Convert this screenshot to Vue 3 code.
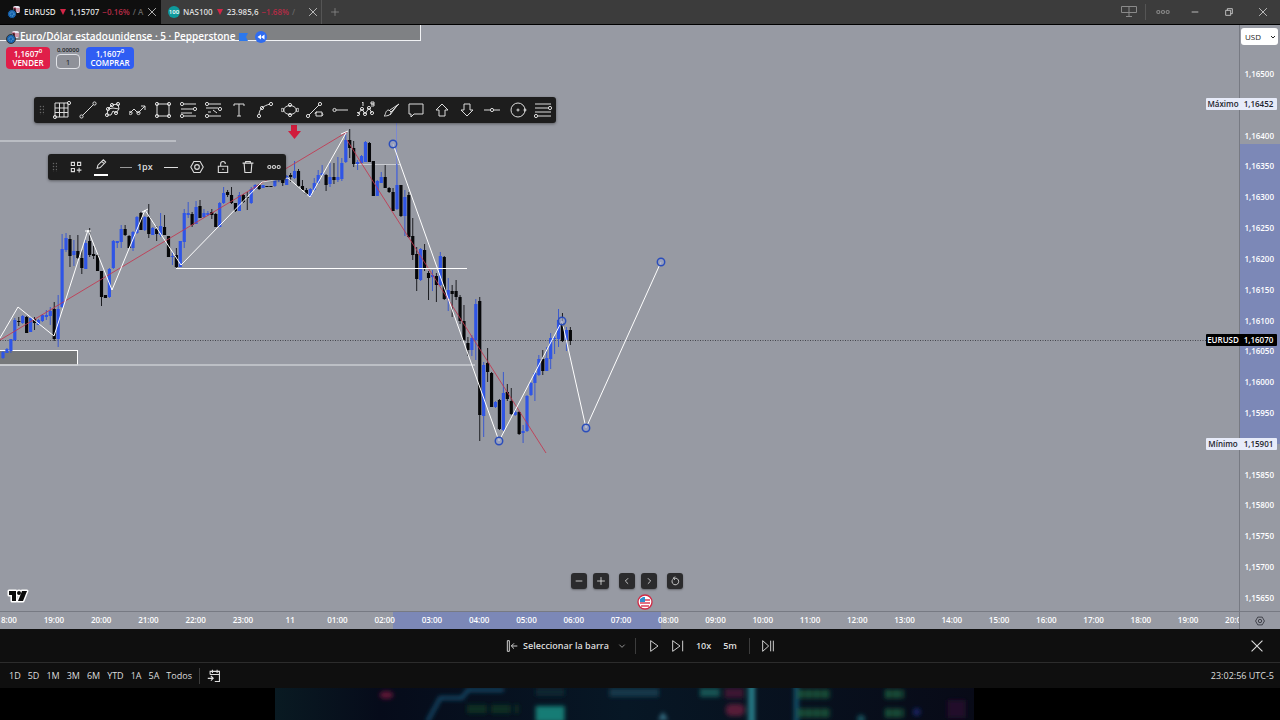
<script setup>
const dot = (x, y, r = 1.6) => `M${x - r} ${y}a${r} ${r} 0 1 0 ${2 * r} 0a${r} ${r} 0 1 0 ${-2 * r} 0`

const drawTools = [
  { name: 'Retroceso de Fibonacci', d: 'M2 2H15V16H2ZM2 7H15M2 11.500H15M6.500 2V16M11 2V16' + dot(2, 16) + dot(16, 2) },
  { name: 'Línea de tendencia', d: 'M3.500 14.500L14.500 3.500' + dot(2.5, 15.5) + dot(15.5, 2.5) },
  { name: 'Canal de Gann', d: 'M3 14L4 8L8 4L14 3L15 8L12 12L9 10L7 14ZM4 8L9 7L15 8' + dot(3, 14) + dot(8, 4) + dot(14, 3) + dot(12, 12) + dot(4, 8) },
  { name: 'Trazado', d: 'M1 12L5 8L9 12L16 5M12 5H16V9' + dot(1.5, 12) + dot(9.5, 12) },
  { name: 'Rectángulo', d: 'M3 3H15V15H3Z' + dot(3, 3) + dot(15, 3) + dot(3, 15) + dot(15, 15) },
  { name: 'Posición larga', d: 'M4 3H16M1 8H13M1 12H12M4 15H16' + dot(2, 3) + dot(15, 8) + dot(2, 15) },
  { name: 'Posición corta', d: 'M4 3H16M1 7H13M3 11H6M8 9L12 12M4 15H16' + dot(2, 3) + dot(15, 8) + dot(2, 15) },
  { name: 'Texto', d: 'M4 5V3H14V5M9 3V15M7 15H11' },
  { name: 'Curva', d: 'M3 14C3 8 7 5 14 3' + dot(3, 15) + dot(15, 3) + dot(6, 7) },
  { name: 'Elipse', d: 'M2 9C5 3 13 3 16 9C13 15 5 15 2 9' + dot(1.5, 9) + dot(16.5, 9) + dot(9, 4) + dot(9, 14) },
  { name: 'Línea y forma', d: 'M3 14L13 4M10 11H16V15H10ZM9 13A2 2 0 0 1 11 11M16 12A2 2 0 0 1 16 15' + dot(2, 15) + dot(14, 3) },
  { name: 'Rayo horizontal', d: 'M4 9H16' + dot(2.5, 9) },
  { name: 'Ondas de Elliott', d: 'M1 13L5 8L8 13L12 7L15 12M5 2L6 1V5M14 1H17V3H14ZM14 3H17V5H14' + dot(1, 13) + dot(5, 8) + dot(8, 13) + dot(12, 7) + dot(15, 12) },
  { name: 'Pincel', d: 'M17 3L9 11M17 3L11 7L8 9M2 15C4 14 3 9 7 9L9 11C9 14 6 15 2 15M14 6L8 14' },
  { name: 'Comentario', d: 'M2 3H16V13H7L4 16V13H2Z' },
  { name: 'Flecha arriba', d: 'M9 3L15 9H12V15H6V9H3Z' },
  { name: 'Flecha abajo', d: 'M9 15L15 9H12V3H6V9H3Z' },
  { name: 'Línea horizontal', d: 'M1 9H7M11 9H17' + dot(9, 9) },
  { name: 'Círculo', d: dot(9, 9, 7) + dot(9, 9, 1) + dot(16, 9, 1) },
  { name: 'Niveles', d: 'M1 3H17M1 7H14M1 11H17M4 15H17' + dot(16, 7) + dot(2, 15) },
]
const icons = {
  layout: 'M3 3H7V7H3ZM11 3H15V7H11ZM3 11H7V15H3ZM13 10V16M10 13H16',
  pencil: 'M4 12L5 8L12 1L15 4L8 11ZM10 3L13 6',
  hex: 'M5 2H13L17 9L13 16H5L1 9Z' + dot(9, 9, 3),
  lock: 'M3 8H15V16H3ZM6 8V5C6 1 12 1 12 5M9 11V13',
  trash: 'M2 4H16M6 4V2H12V4M4 4L5 16H13L14 4',
  more: dot(3, 9, 2) + dot(9, 9, 2) + dot(15, 9, 2),
  close: 'M4 4L14 14M14 4L4 14',
  wideClose: 'M2 2L16 16M16 2L2 16',
  plus: 'M9 2V16M2 9H16',
  minus: 'M3 9H15',
  left: 'M11 4L6 9L11 14',
  right: 'M7 4L12 9L7 14',
  down: 'M3 6L9 12L15 6',
  reset: 'M5 6A6 6 0 1 0 11 4H6M9 1L6 4L9 7',
  play: 'M4 1L15 9L4 17Z',
  step: 'M1 1L12 9L1 17ZM16 1V17',
  end: 'M1 1L10 9L1 17ZM13 1V17M17 1V17',
  calendar: 'M4 7V3H16V16H10M4 7H16M7 1V5M13 1V5M1 12H7M5 9L8 12L5 15',
}

const U = 1
const D = 0
const candles = [
  [U,351,352,358,359],[U,348,349,353,353],[U,339,339,351,353],[U,318,320,340,341],[D,317,321,322,326],
  [U,315,316,323,324],[D,316,317,333,333],[U,317,318,332,332],[D,317,319,323,330],[U,319,320,325,325],
  [U,314,315,321,322],[U,310,315,317,320],[U,307,311,316,325],[D,302,309,339,341],[U,295,309,339,347],
  [U,234,249,307,308],[U,233,238,250,252],[D,235,239,256,267],[U,240,251,255,266],[D,235,251,258,259],
  [D,250,258,268,274],[U,240,243,269,269],[D,228,241,255,257],[D,246,254,256,259],[D,254,255,271,271],
  [D,271,271,297,306],[D,295,295,298,298],[U,268,269,297,298],[U,240,241,268,269],[U,241,241,243,248],
  [U,225,229,242,248],[D,225,229,235,236],[D,235,236,248,248],[U,231,232,248,251],[U,216,217,233,234],
  [D,212,213,230,230],[U,216,217,230,231],[D,204,217,234,238],[U,227,228,235,235],[D,226,229,234,241],
  [U,213,226,235,237],[D,215,227,235,235],[D,236,236,257,257],[U,252,256,257,265],[D,248,255,267,268],
  [U,241,241,267,267],[U,209,213,242,248],[U,202,213,215,218],[D,212,214,225,227],[U,201,207,224,224],
  [D,200,206,218,218],[U,209,213,217,218],[U,211,213,215,216],[D,209,212,215,219],[D,213,214,227,227],
  [U,202,203,227,227],[U,187,193,203,204],[D,190,192,195,197],[D,187,195,203,204],[D,203,203,211,212],
  [U,192,195,211,211],[D,194,195,202,203],[D,192,197,198,210],[U,187,189,203,204],[U,184,185,189,190],
  [D,184,185,189,190],[U,185,185,188,188],[D,186,186,187,187],[D,186,186,187,187],[U,178,179,186,187],
  [U,177,178,180,182],[D,176,177,183,186],[U,175,176,185,185],[D,173,175,177,182],[U,161,171,178,179],
  [D,169,171,186,187],[D,180,186,190,191],[D,188,190,194,195],[U,188,189,196,197],[U,178,183,190,191],
  [U,170,175,183,184],[U,165,173,175,176],[D,174,175,185,191],[U,163,177,184,187],[D,163,177,180,184],
  [U,157,177,180,182],[U,158,163,179,181],[U,133,140,162,163],[D,129,140,148,158],[D,141,148,164,167],
  [U,160,162,164,170],[U,155,156,163,163],[U,141,142,162,162],[D,142,143,162,162],[D,161,161,196,196],
  [U,180,181,196,196],[U,172,177,183,183],[D,165,177,188,188],[D,187,188,192,193],[D,188,192,211,211],
  [U,164,185,209,210],[D,185,185,216,217],[U,190,197,216,236],[D,192,195,237,238],[D,218,236,255,260],
  [D,247,254,279,291],[U,248,249,280,281],[D,244,250,269,271],[D,271,273,278,300],[U,270,275,277,291],
  [D,273,276,285,302],[U,252,256,285,286],[D,256,257,299,300],[U,278,290,299,311],[D,285,291,294,317],
  [D,280,291,297,300],[D,295,297,321,324],[D,305,321,340,341],[D,337,343,350,356],[U,335,338,350,356],
  [U,299,304,340,360],[D,297,301,415,441],[U,362,365,416,437],[D,348,363,372,382],[D,372,373,407,407],
  [U,401,402,407,408],[D,399,400,429,430],[U,372,393,430,431],[D,384,392,399,401],[D,388,401,414,415],
  [U,410,412,415,416],[D,411,412,434,435],[U,425,431,433,443],[U,395,396,431,432],[U,382,383,395,396],
  [U,372,373,383,401],[U,355,359,375,376],[D,350,359,371,375],[U,347,358,371,371],[U,333,338,359,369],
  [U,335,338,339,354],[U,309,320,339,347],[D,313,323,341,342],[U,327,330,340,351],[D,327,330,341,345],
].map(([up, high, top, bottom, low], i) => ({ up, high, top, bottom, low, x: 3 + i * 3.94 }))

const handles = [[393, 144], [499, 441], [562, 321], [586, 428], [661, 262]]

const prices = Array.from({ length: 18 }, (_, i) => '1,' + (16500 - i * 50))
const hiddenPrices = ['1,16450', '1,15900']
const tags = [
  { label: 'Máximo', price: '1,16452', top: 79, kind: 'light' },
  { label: 'EURUSD', price: '1,16070', top: 315, kind: 'dark' },
  { label: 'Mínimo', price: '1,15901', top: 419, kind: 'light' },
].map((t) => ({ ...t, pos: (t.top / 586) * 100 + '%' }))

const hours = ['18:00', '19:00', '20:00', '21:00', '22:00', '23:00', '11',
  ...Array.from({ length: 20 }, (_, i) => String(i + 1).padStart(2, '0') + ':00')]
const ranges = ['1D', '5D', '1M', '3M', '6M', 'YTD', '1A', '5A', 'Todos']
</script>

<template>
  <div class="app">
    <header class="titlebar">
      <div class="tab active">
        <svg class="pair" viewBox="0 0 14 14"><rect x="6" y="1" width="7" height="7" rx="2" fill="#e8e8f2" /><path d="M6 3h3v4M10 4h3M10 6h3" stroke="#b74962" /><circle cx="5" cy="9" r="4.500" fill="#1762ae" stroke="#101010" /><circle cx="5" cy="9" r="2" fill="none" stroke="#72b8db" stroke-dasharray="1 1" /></svg>
        <b>EURUSD</b><i class="fall"></i><span>1,15707</span><span class="loss">−0.16%</span><span class="fade">/ A</span>
        <button class="icon-btn push" aria-label="Cerrar EURUSD"><svg class="ic s10" viewBox="0 0 18 18"><path :d="icons.wideClose" /></svg></button>
      </div>
      <div class="tab">
        <span class="hundred">100</span>
        <b>NAS100</b><i class="fall"></i><span>23.985,6</span><span class="loss">−1.68%</span><span class="fade">/</span>
        <button class="icon-btn push" aria-label="Cerrar NAS100"><svg class="ic s10" viewBox="0 0 18 18"><path :d="icons.wideClose" /></svg></button>
      </div>
      <button class="icon-btn add" aria-label="Nueva pestaña"><svg class="ic s10" viewBox="0 0 18 18"><path :d="icons.plus" /></svg></button>
      <div class="window-tools">
        <button class="icon-btn dim" aria-label="Diseño"><svg class="ic wide" viewBox="0 0 16 12"><path d="M.5.5H15.500V6.500H.5ZM8 .5V10.500M5 10.500H11" /></svg></button>
        <span class="rule"></span>
        <button class="icon-btn dim more" aria-label="Más"><svg class="ic s14" viewBox="0 0 18 18"><path :d="icons.more" /></svg></button>
        <button class="icon-btn" aria-label="Minimizar"><svg class="ic s10" viewBox="0 0 18 18"><path :d="icons.minus" /></svg></button>
        <button class="icon-btn" aria-label="Restaurar"><svg class="ic s10" viewBox="0 0 18 18"><path d="M3 6H12V15H3ZM6 6V3H15V12H12" /></svg></button>
        <button class="icon-btn" aria-label="Cerrar"><svg class="ic s10" viewBox="0 0 18 18"><path :d="icons.wideClose" /></svg></button>
      </div>
    </header>

    <main class="board">
      <section class="plot">
        <svg class="canvas" viewBox="0 25 1239 586" preserveAspectRatio="none">
          <rect x="-2" y="23" width="422.500" height="17.500" fill="#7f8184" stroke="#f1f2f4" />
          <path d="M0 141H176" stroke="#c6c8ce" stroke-width="1.500" />
          <rect x="-2" y="350.500" width="79.500" height="14.500" fill="#77797b" stroke="#fff" />
          <path d="M0 365H475" stroke="#c9cbd1" stroke-width="1.500" />
          <path d="M355 164.500H400" stroke="#c9cbd1" />
          <path d="M396.500 120V210" stroke="#7b88d0" />
          <path d="M0 340.500H1239" stroke="#44464c" stroke-dasharray="1 1.500" />
          <g v-for="(c, i) in candles" :key="i" :class="c.up ? 'up' : 'down'">
            <line :x1="c.x" :x2="c.x" :y1="c.high" :y2="c.low" />
            <rect :x="c.x - 1.6" :y="c.top" width="3.200" :height="c.bottom - c.top" />
          </g>
          <g fill="none">
            <path d="M0 340L347 132M347 140L360 161L546 453" stroke="#c4364f" stroke-opacity=".85" />
            <path d="M0 338L18 307L54 336L88 230L112 290L145 210L181 265L262 182L288 178L310 197L346 133" stroke="#fff" />
            <path d="M176 268.500H467M85 231H91M142 212L148 209M341 134L348 131" stroke="#fff" />
            <path d="M393 144L499 441L562 321L586 428L661 262" stroke="#fff" />
          </g>
          <circle v-for="(h, i) in handles" :key="'h' + i" :cx="h[0]" :cy="h[1]" r="3.700" class="handle" />
          <path d="M291 125H297V131H301L294.500 139L288 131H291Z" fill="#d11c3c" />
        </svg>

        <div class="legend">
          <h1>
            <svg class="pair" viewBox="0 0 14 14"><rect x="6" y="1" width="7" height="7" rx="2" fill="#e8e8f2" /><path d="M6 3h3v4M10 4h3M10 6h3" stroke="#b74962" /><circle cx="5" cy="9" r="4.500" fill="#1762ae" stroke="#333" /><circle cx="5" cy="9" r="2" fill="none" stroke="#72b8db" stroke-dasharray="1 1" /></svg>
            <span>Euro/Dólar estadounidense · 5 · Pepperstone</span>
            <svg class="flag" viewBox="0 0 9 8"><path d="M0 0H9L7 4L9 8H0Z" fill="#2c78ed" /></svg>
            <svg class="rewind" viewBox="0 0 12 12"><circle cx="6" cy="6" r="6" fill="#2f6cf0" /><path d="M6 3.500V8.500L2.500 6ZM9.500 3.500V8.500L6 6Z" fill="#fff" /></svg>
          </h1>
          <div class="trade">
            <button class="sell"><span>1,1607<sup>0</sup></span><span>VENDER</span></button>
            <label class="lots"><span>0,00000</span><input value="1" aria-label="Cantidad" /></label>
            <button class="buy"><span>1,1607<sup>0</sup></span><span>COMPRAR</span></button>
          </div>
        </div>

        <div class="toolbar draw">
          <span class="grip"></span>
          <button v-for="t in drawTools" :key="t.name" class="icon-btn" :aria-label="t.name"><svg class="ic s18" viewBox="0 0 18 18"><path :d="t.d" /></svg></button>
        </div>

        <div class="toolbar style-bar">
          <span class="grip"></span>
          <button class="icon-btn" aria-label="Plantillas"><svg class="ic s14" viewBox="0 0 18 18"><path :d="icons.layout" /></svg></button>
          <button class="icon-btn color" aria-label="Color"><svg class="ic s14" viewBox="0 0 18 18"><path :d="icons.pencil" /></svg></button>
          <button class="icon-btn width"><i class="dash grey"></i>1px</button>
          <button class="icon-btn" aria-label="Estilo de línea"><i class="dash"></i></button>
          <button class="icon-btn" aria-label="Configuración"><svg class="ic s14" viewBox="0 0 18 18"><path :d="icons.hex" /></svg></button>
          <button class="icon-btn" aria-label="Bloquear"><svg class="ic s14" viewBox="0 0 18 18"><path :d="icons.lock" /></svg></button>
          <button class="icon-btn" aria-label="Eliminar"><svg class="ic s14" viewBox="0 0 18 18"><path :d="icons.trash" /></svg></button>
          <button class="icon-btn" aria-label="Más opciones"><svg class="ic s14" viewBox="0 0 18 18"><path :d="icons.more" /></svg></button>
        </div>

        <div class="nav">
          <button aria-label="Alejar"><svg class="ic s10" viewBox="0 0 18 18"><path :d="icons.minus" /></svg></button>
          <button aria-label="Acercar"><svg class="ic s10" viewBox="0 0 18 18"><path :d="icons.plus" /></svg></button>
          <button class="gap" aria-label="Izquierda"><svg class="ic s10" viewBox="0 0 18 18"><path :d="icons.left" /></svg></button>
          <button aria-label="Derecha"><svg class="ic s10" viewBox="0 0 18 18"><path :d="icons.right" /></svg></button>
          <button class="gap" aria-label="Restablecer"><svg class="ic s10" viewBox="0 0 18 18"><path :d="icons.reset" /></svg></button>
        </div>
        <svg class="event" viewBox="0 0 16 16"><circle cx="8" cy="8" r="7" fill="#fff" stroke="#cf2945" stroke-width="1.300" /><path d="M8 6H13M3 9H13M4 12H12" stroke="#d9415b" stroke-width="1.300" /><path d="M3 7V5L6 3H8V8H3Z" fill="#2d8fd0" /></svg>
        <svg class="logo" viewBox="0 0 22 14"><g fill="#0b0b0b" stroke="#fff" stroke-width="3" stroke-linejoin="round"><path d="M2 2H9V12H5V6H2Z" /><circle cx="12" cy="4" r="2" /><path d="M15 2H20L16 12H11Z" /></g><g fill="#0b0b0b"><path d="M2 2H9V12H5V6H2Z" /><circle cx="12" cy="4" r="2" /><path d="M15 2H20L16 12H11Z" /></g></svg>
      </section>

      <aside class="price-axis">
        <div class="span"></div>
        <select aria-label="Moneda"><option>USD</option></select>
        <svg class="chev" viewBox="0 0 18 18"><path :d="icons.down" /></svg>
        <ol>
          <li v-for="p in prices" :key="p"><template v-if="!hiddenPrices.includes(p)">{{ p }}</template></li>
        </ol>
      </aside>
      <div v-for="t in tags" :key="t.label" class="tag" :class="t.kind" :style="{ top: t.pos }"><span>{{ t.label }}</span><span>{{ t.price }}</span></div>
    </main>

    <div class="time-row">
      <div class="time-axis"><div class="hours"><i class="time-span"></i><span v-for="h in hours" :key="h">{{ h }}</span></div></div>
      <button class="icon-btn corner" aria-label="Configurar escala"><svg class="ic s10" viewBox="0 0 18 18"><path :d="icons.hex" /></svg></button>
    </div>

    <section class="replay">
      <button class="pick"><svg class="ic s12" viewBox="0 0 18 18"><path d="M2 1H5V17H2ZM8 9H17M12 5L8 9L12 13" /></svg><span>Seleccionar la barra</span><svg class="ic s8" viewBox="0 0 18 18"><path :d="icons.down" /></svg></button>
      <span class="rule"></span>
      <button aria-label="Reproducir"><svg class="ic s12" viewBox="0 0 18 18"><path :d="icons.play" /></svg></button>
      <button aria-label="Avanzar"><svg class="ic s12" viewBox="0 0 18 18"><path :d="icons.step" /></svg></button>
      <button>10x</button>
      <button>5m</button>
      <span class="rule"></span>
      <button aria-label="Ir al final"><svg class="ic s12" viewBox="0 0 18 18"><path :d="icons.end" /></svg></button>
      <button class="quit" aria-label="Cerrar reproducción"><svg class="ic s14" viewBox="0 0 18 18"><path :d="icons.wideClose" /></svg></button>
    </section>

    <nav class="ranges">
      <button v-for="r in ranges" :key="r">{{ r }}</button>
      <span class="rule"></span>
      <button aria-label="Ir a fecha"><svg class="ic s14" viewBox="0 0 18 18"><path :d="icons.calendar" /></svg></button>
      <time>23:02:56 UTC-5</time>
    </nav>

    <footer class="wallpaper">
      <svg viewBox="0 0 703 32" preserveAspectRatio="none">
        <defs>
          <linearGradient id="night"><stop offset="0" stop-color="#091a22" /><stop offset=".15" stop-color="#060b1a" /><stop offset=".5" stop-color="#071725" /><stop offset="1" stop-color="#080a17" /></linearGradient>
          <filter id="soft"><feGaussianBlur stdDeviation="2" /></filter>
        </defs>
        <rect width="703" height="32" fill="url(#night)" />
        <g filter="url(#soft)">
          <path d="M153 34L166 10H188L194 2H230" fill="none" stroke="#184562" stroke-width="4" />
          <rect x="262" y="18" width="29" height="16" fill="#167c75" /><rect x="262" y="0" width="29" height="8" fill="#0d2632" />
          <rect x="336" y="0" width="50" height="9" fill="#163749" /><rect x="427" y="0" width="20" height="9" fill="#185352" />
          <rect x="452" y="0" width="19" height="10" fill="#3c1830" /><rect x="453" y="16" width="19" height="12" rx="5" fill="#571a37" />
          <path d="M479 -4V36" stroke="#267884" stroke-width="7" /><path d="M524 -4V36" stroke="#184f68" stroke-width="5" />
          <path d="M525 6H558M525 25H558M613 6H632M613 25H632" stroke="#195039" stroke-width="9" stroke-dasharray="7 1" />
          <path d="M193 21H245" stroke="#0b2d22" stroke-width="9" stroke-dasharray="20 4" />
          <ellipse cx="112" cy="7" rx="7" ry="4" fill="#5b1935" /><path d="M385 32L390 24L395 32" fill="#397388" /><circle cx="645" cy="24" r="4" fill="#14245d" /><circle cx="589" cy="31" r="4" fill="#18515b" /><rect x="676" y="12" width="18" height="18" fill="#21102b" />
        </g>
      </svg>
    </footer>
  </div>
</template>

<style>
body { margin: 0; background: #000; }
</style>

<style scoped>
.app { display: flex; flex-direction: column; min-height: 100vh; overflow: hidden; color: #ddd; font: 600 9px/12px "Open Sans", "Noto Sans", sans-serif; }
* { box-sizing: border-box; }
button { padding: 0; border: 0; background: none; color: inherit; font: inherit; }
svg { display: block; flex: none; }
.ic { fill: none; stroke: currentColor; stroke-width: 1.4; }
.s8 { width: 8px; height: 8px; }
.s10 { width: 10px; height: 10px; }
.s12 { width: 12px; height: 12px; }
.s14 { width: 14px; height: 14px; }
.s18 { width: 18px; height: 18px; stroke-width: 1; }
.wide { width: 16px; height: 12px; stroke-width: 1; }
.icon-btn { display: flex; align-items: center; justify-content: center; flex: none; }
.pair { width: 14px; height: 14px; }
.rule { width: 1px; height: 16px; background: #3c3c3c; }

.titlebar { display: flex; align-items: center; height: 25px; background: #3c3c3c; border-bottom: 1px solid #000; }
.tab { display: flex; align-items: center; gap: 3px; width: 161px; height: 24px; padding: 0 3px 0 7px; white-space: nowrap; font-size: 8px; border-right: 1px solid #555; }
.tab.active { background: #0f0f0f; border-color: #0f0f0f; }
.tab b { font-weight: 600; }
.tab .push { margin-left: auto; }
.fall { margin: 0 1px; border: 3px solid transparent; border-top: 6px solid #d32647; border-bottom: 0; }
.loss { color: #b62b46; }
.fade { color: #666; }
.hundred { width: 12px; height: 12px; border-radius: 50%; background: #0e9a9c; color: #fff; font-size: 6px; text-align: center; }
.add { margin-left: 8px; color: #8d8d8d; }
.window-tools { display: flex; align-items: center; gap: 24px; margin-left: auto; padding-right: 12px; }
.window-tools .rule { background: #555; margin: 0 -14px 0 -16px; }
.dim { color: #8a8a8a; }
.more { margin-right: -4px; }

.board { position: relative; display: flex; flex: 1; min-height: 0; background: #979aa3; }
.plot { position: relative; flex: 1; min-width: 0; }
.canvas { position: absolute; inset: 0; width: 100%; height: 100%; }
.up rect { fill: #2f55e6; }
.up line { stroke: #3a59cf; }
.down rect { fill: #060709; }
.down line { stroke: #1c1d21; }
.handle { fill: #9aa3c4; fill-opacity: .7; stroke: #2a4dbb; stroke-width: 1.5; }
.legend { position: relative; padding: 4px 6px; }
h1 { display: flex; align-items: center; margin: 0; height: 15px; color: #fff; font-size: 10px; line-height: 15px; font-weight: 600; white-space: nowrap; }
.flag { width: 9px; height: 8px; margin: 0 7px 0 4px; }
.rewind { width: 12px; height: 12px; }
.trade { display: flex; align-items: flex-start; gap: 6px; margin-top: 3px; }
.sell, .buy { display: flex; flex-direction: column; align-items: center; justify-content: center; width: 44px; height: 22px; border-radius: 4px; color: #fff; font-size: 8px; line-height: 10px; background: #e01e49; }
.buy { width: 48px; background: #2f5df3; }
sup { font-size: 6px; line-height: 6px; }
.lots { display: flex; flex-direction: column; align-items: center; width: 24px; font-size: 6px; line-height: 6px; color: #1d1f24; }
.lots input { width: 24px; height: 15px; margin-top: 1px; padding: 0; border: 1px solid #e2e3e8; border-radius: 4px; background: #8f9199; text-align: center; font: 400 8px/12px "Open Sans", sans-serif; color: #222; }

.toolbar { position: absolute; display: flex; align-items: center; justify-content: space-between; height: 26px; border-radius: 3px; background: #1d1d1d; color: #dcdcdc; box-shadow: 0 1px 3px #0006; }
.draw { left: 34px; top: 72px; width: 522px; padding: 0 4px 0 5px; }
.draw .grip { margin-right: 2px; }
.grip { width: 5px; height: 10px; background: radial-gradient(circle, #666 30%, transparent 50%) 0 0 / 3px 3px; }
.style-bar { left: 48px; top: 129px; width: 238px; padding: 0 5px 0 4px; }
.color { flex-direction: column; gap: 1px; }
.color::after { content: ""; width: 14px; height: 2px; background: #fff; }
.width { gap: 5px; }
.dash { width: 14px; height: 1px; background: #ddd; }
.dash.grey { width: 12px; background: #999; }

.nav { position: absolute; left: 571px; bottom: 22px; display: flex; gap: 6px; }
.nav button { display: grid; place-items: center; width: 16px; height: 16px; border-radius: 3px; background: #2b2b2d; color: #eee; box-shadow: 0 1px 2px #0005; }
.nav .gap { margin-left: 4px; }
.event { position: absolute; left: 637px; bottom: 1px; width: 16px; height: 16px; }
.logo { position: absolute; left: 7px; bottom: 8px; width: 22px; height: 14px; }

.price-axis { position: relative; width: 41px; border-left: 1px solid #777a83; color: #fff; font-size: 8px; }
.span { position: absolute; inset: 20.300% 0 28.500%; background: #7c88b7; }
select { position: absolute; left: 1px; top: 3px; width: 37px; height: 17px; padding: 0 4px; border: 0; border-radius: 3px; background: #fff; color: #222; font: 400 8px/12px "Open Sans", sans-serif; appearance: none; }
.chev { position: absolute; right: 4px; top: 9px; width: 6px; height: 6px; fill: none; stroke: #222; stroke-width: 3; }
ol { position: relative; display: flex; flex-direction: column; justify-content: space-between; height: 100%; margin: 0; padding: 43px 6px 7px 0; list-style: none; text-align: right; }
li { height: 12px; }
.tag { position: absolute; right: 3px; margin-top: -6px; display: grid; grid-template-columns: 34px 37px; height: 12px; font-size: 8px; line-height: 12px; text-align: center; border-radius: 1px; }
.tag.light { background: #e7ebf9; color: #22242b; }
.tag.dark { background: #000; color: #fff; }

.time-row { display: flex; height: 18px; border-top: 1px solid #777a83; background: #979aa3; color: #fff; }
.time-axis { flex: 1; min-width: 0; overflow: hidden; }
.hours { position: relative; display: grid; grid-template-columns: repeat(27, 1fr); margin: 0 -20px 0 -17px; font-size: 8px; line-height: 16px; text-align: center; }
.hours span { position: relative; }
.time-span { position: absolute; left: 32.100%; width: 21%; height: 18px; background: #7c88b7; }
.corner { width: 41px; border-left: 1px solid #777a83; color: #2b2c33; }

.replay { position: relative; display: flex; align-items: center; justify-content: center; gap: 12px; height: 34px; background: #0f0f0f; border-bottom: 1px solid #2c2c2c; }
.pick { display: flex; align-items: center; gap: 5px; margin-right: -3px; }
.pick .s8 { margin-left: 4px; }
.quit { position: absolute; right: 16px; }
.ranges { display: flex; align-items: center; gap: 7px; height: 25px; padding: 0 6px 0 9px; background: #0f0f0f; font-weight: 400; }
.ranges time { margin-left: auto; }
.wallpaper { display: flex; justify-content: center; height: 32px; background: #000; padding-right: 31px; }
.wallpaper svg { width: 56%; height: 32px; overflow: hidden; }
</style>
